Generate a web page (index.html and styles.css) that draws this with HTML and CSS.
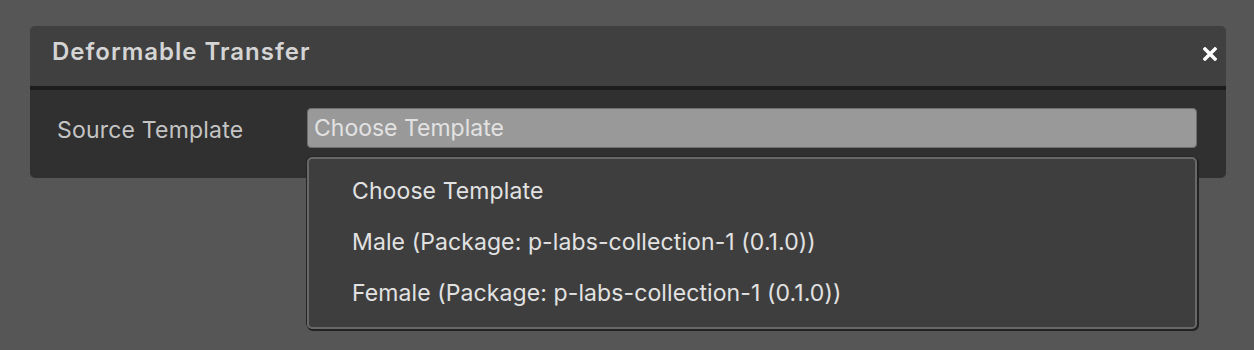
FILE: index.html
```html
<!DOCTYPE html>
<html lang="en">
<head>
    <meta charset="UTF-8">
    <meta name="viewport" content="width=device-width, initial-scale=1.0">
    <title>Deformable Transfer</title>
    <link rel="stylesheet" href="styles.css">
</head>
<body>
    <div class="janela">
        <div class="cabecalho">
            <span class="titulo">Deformable Transfer</span>
            <svg class="fechar" width="14" height="14" viewBox="0 0 14 14">
                <path d="M2 2 L12 12 M12 2 L2 12" stroke="#ffffff" stroke-width="3.4" stroke-linecap="square"/>
            </svg>
        </div>
        <div class="corpo">
            <span class="rotulo">Source Template</span>
            <div class="campo">
                <div class="seletor">Choose Template</div>
                <ul class="lista">
                    <li>Choose Template</li>
                    <li>Male (Package: p-labs-collection-1 (0.1.0))</li>
                    <li>Female (Package: p-labs-collection-1 (0.1.0))</li>
                </ul>
            </div>
        </div>
    </div>
</body>
</html>
```

FILE: styles.css
```css
html{
    height: 100%;
}

body{
    background-color: #565656;
    margin: 0;
    padding: 26px 28px 0 30px;
    min-height: 100%;
    box-sizing: border-box;
    font-family: Inter, "Noto Sans", sans-serif;
}

.janela{
    border-radius: 5px;
    width: 1196px;
}

.cabecalho{
    background-color: #404040;
    height: 60px;
    border-radius: 5px 5px 0 0;
    border-bottom: 4px solid #1c1c1c;
    display: flex;
    align-items: center;
    justify-content: space-between;
    padding: 0 9px 0 22px;
}

.titulo{
    color: #d4d4d4;
    font-weight: 600;
    font-size: 24px;
    letter-spacing: 1px;
    margin-top: -10px;
}

.fechar{
    margin-top: -4px;
}

.corpo{
    background-color: #303030;
    height: 88px;
    border-radius: 0 0 5px 5px;
    display: flex;
    align-items: flex-start;
    padding: 18px 0 0 27px;
    box-sizing: border-box;
}

.rotulo{
    color: #c4c4c4;
    font-size: 23px;
    letter-spacing: 0.2px;
    width: 250px;
    margin-top: 8px;
}

.campo{
    position: relative;
    width: 890px;
}

.seletor{
    background-color: #999999;
    border: 1px solid #6e6e6e;
    border-radius: 4px;
    height: 40px;
    box-sizing: border-box;
    color: #e2e2e2;
    font-size: 23px;
    line-height: 38px;
    padding-left: 6px;
}

.lista{
    position: absolute;
    top: 49px;
    left: 0;
    width: 890px;
    height: 172px;
    box-sizing: border-box;
    margin: 0;
    padding: 7px 0 0 0;
    list-style: none;
    background-color: #3e3e3e;
    border: 2px solid #686868;
    border-radius: 5px;
    box-shadow: -1px -1px 0 #262626, 1px 1px 0 1px #222222;
}

.lista li{
    color: #e2e2e2;
    font-size: 23px;
    letter-spacing: 0.1px;
    height: 51px;
    line-height: 51px;
    padding-left: 43px;
}
```
